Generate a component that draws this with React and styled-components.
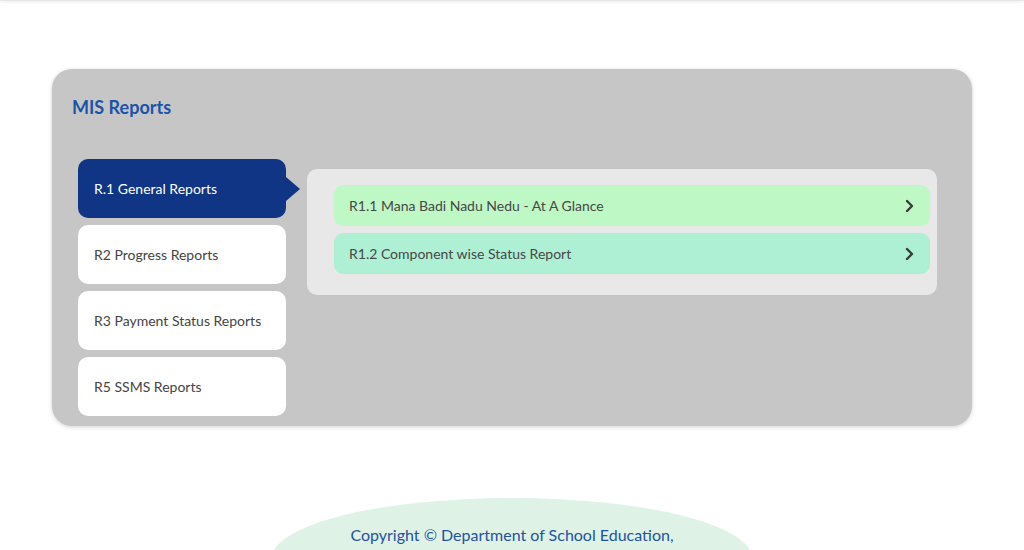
import React, { useState } from "react";
import styled, { createGlobalStyle } from "styled-components";

const GlobalStyle = createGlobalStyle`
  body {
    margin: 0;
    font-family: Lato, "Open Sans", sans-serif;
    background: #ffffff;
    overflow: hidden;
  }
`;

const TopBar = styled.div`
  height: 1px;
  background: #e6e6e6;
  box-shadow: 0 1px 3px rgba(0, 0, 0, 0.15);
`;

const Page = styled.div`
  display: flex;
  flex-direction: column;
  align-items: center;
`;

const Card = styled.section`
  width: 920px;
  margin-top: 68px;
  box-sizing: border-box;
  padding: 27px 35px 10px 20px;
  background: #c6c6c6;
  border-radius: 20px;
  box-shadow: 0 1px 4px rgba(0, 0, 0, 0.18);
`;

const Title = styled.h2`
  margin: 0;
  font-size: 18px;
  line-height: 22px;
  font-weight: 700;
  color: #1a54a6;
`;

const Body = styled.div`
  display: flex;
  align-items: flex-start;
  gap: 21px;
  margin-top: 41px;
  padding-left: 6px;
`;

const Tabs = styled.div`
  display: flex;
  flex-direction: column;
  gap: 7px;
  width: 208px;
`;

const Tab = styled.div`
  position: relative;
  height: 59px;
  display: flex;
  align-items: center;
  padding-left: 16px;
  box-sizing: border-box;
  border-radius: 10px;
  font-size: 14px;
  cursor: pointer;
  background: ${(p) => (p.$active ? "#0f3584" : "#ffffff")};
  color: ${(p) => (p.$active ? "#ffffff" : "#444444")};

  &::after {
    content: "";
    display: ${(p) => (p.$active ? "block" : "none")};
    position: absolute;
    right: -14px;
    top: 50%;
    transform: translateY(-50%);
    border-top: 12px solid transparent;
    border-bottom: 12px solid transparent;
    border-left: 14px solid #0f3584;
  }
`;

const Panel = styled.div`
  flex: 1;
  margin-top: 10px;
  display: flex;
  flex-direction: column;
  gap: 7px;
  padding: 16px 7px 21px 27px;
  background: #e8e8e8;
  border-radius: 10px;
`;

const Item = styled.div`
  height: 41px;
  display: flex;
  align-items: center;
  justify-content: space-between;
  padding: 0 16px 0 15px;
  border-radius: 9px;
  font-size: 14px;
  color: #474747;
  background: ${(p) => p.$bg};
  cursor: pointer;
`;

const Chevron = () => (
  <svg width="9" height="14" viewBox="0 0 9 14">
    <path
      d="M2 2l5 5-5 5"
      fill="none"
      stroke="#3a3a3a"
      strokeWidth="2.4"
      strokeLinecap="round"
      strokeLinejoin="round"
    />
  </svg>
);

const Footer = styled.footer`
  margin-top: 72px;
  width: 480px;
  height: 120px;
  border-radius: 50%;
  background: #def3e6;
  display: flex;
  justify-content: center;
  padding-top: 27px;
  box-sizing: border-box;
  font-size: 16px;
  color: #1f52a0;
`;

const tabs = [
  "R.1 General Reports",
  "R2 Progress Reports",
  "R3 Payment Status Reports",
  "R5 SSMS Reports",
];

const items = [
  { label: "R1.1 Mana Badi Nadu Nedu - At A Glance", bg: "#bef8c4" },
  { label: "R1.2 Component wise Status Report", bg: "#adf0d3" },
];

const App = () => {
  const [active, setActive] = useState(0);
  return (
    <>
      <GlobalStyle />
      <TopBar />
      <Page>
        <Card>
          <Title>MIS Reports</Title>
          <Body>
            <Tabs>
              {tabs.map((t, i) => (
                <Tab key={t} $active={i === active} onClick={() => setActive(i)}>
                  {t}
                </Tab>
              ))}
            </Tabs>
            <Panel>
              {items.map((it) => (
                <Item key={it.label} $bg={it.bg}>
                  <span>{it.label}</span>
                  <Chevron />
                </Item>
              ))}
            </Panel>
          </Body>
        </Card>
        <Footer>Copyright © Department of School Education,</Footer>
      </Page>
    </>
  );
};

export default App;
